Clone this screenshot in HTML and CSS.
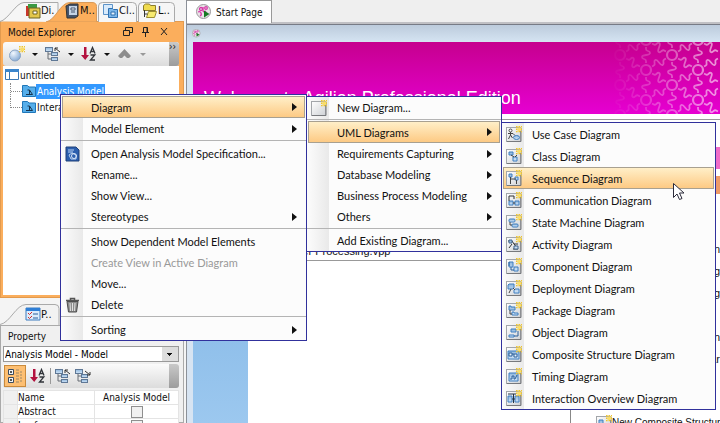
FILE: index.html
```html
<!DOCTYPE html>
<html lang="en">
<head>
  <meta charset="UTF-8">
  <meta name="viewport" content="width=device-width, initial-scale=1.0">
  <title>Agilian - Start Page</title>
  <link rel="stylesheet" href="styles.css">
</head>
<body>
  <!-- Shared icon parts -->
  <svg class="defs" width="0" height="0" aria-hidden="true">
    <defs>
      <linearGradient id="blue" x1="0" y1="0" x2="0" y2="1">
        <stop offset="0" stop-color="#8fb6dc"/><stop offset="1" stop-color="#d3e6f8"/>
      </linearGradient>
      <linearGradient id="paper" x1="0" y1="0" x2="1" y2="1">
        <stop offset="0" stop-color="#ffffff"/><stop offset="1" stop-color="#cfd2d6"/>
      </linearGradient>
      <radialGradient id="ball" cx=".35" cy=".3" r=".8">
        <stop offset="0" stop-color="#f2f8ff"/><stop offset="1" stop-color="#7da3cf"/>
      </radialGradient>
      <linearGradient id="fade">
        <stop offset="0" stop-color="#000"/><stop offset="1" stop-color="#fff"/>
      </linearGradient>
      <g id="spark">
        <path d="M10 0h1.600v1.600h-1.600zM12.500 0h1.600v1.600h-1.600zM15 0h1v1.600h-1zM10 2.400h1.600v1.600h-1.600zM15 2.400h1v1.600h-1zM10 5h1.600v1.300h-1.600zM12.500 5h1.600v1.300h-1.600zM15 5h1v1.300h-1z" fill="#f0c62e"/>
        <rect x="11.500" y="1.600" width="3.500" height="3.400" fill="#f9dd6a"/>
      </g>
      <g id="frame">
        <rect x=".5" y="1.500" width="14" height="14" fill="url(#paper)" stroke="#a3a6aa"/>
        <path d="M1 15.500h14V2" fill="none" stroke="#77797d"/>
      </g>
      <g id="tree">
        <path d="M3 4v9h4M3 8h4" fill="none" stroke="#666c75"/>
        <g fill="url(#blue)" stroke="#5f7896"><rect x=".5" y="1.500" width="7" height="4"/><rect x="6.500" y="6.500" width="6" height="3"/><rect x="6.500" y="11.500" width="6" height="3"/></g>
      </g>
      <g id="sort">
        <path d="M3 1h2.500v8H8l-3.800 5L0 9h3z" fill="#b3123f"/>
        <path d="M9 7.500l2.500-6 2.500 6M10 5.500h3M9.500 9h4.300l-4.300 5h4.500" fill="none" stroke="#30343a" stroke-width="1.300"/>
      </g>
      <g id="folder">
        <path d="M.5 1.500h5l1.500 1.500h6.500v9.500H.5z" fill="#56aeea" stroke="#1f76b8"/>
        <path d="M4 10.500h6.500L7.500 6H5.500M7.500 6v4.500" fill="none" stroke="#16344f"/>
      </g>
      <g id="cell">
        <circle r="5" stroke-width="2.200"/>
        <path id="wave" d="M0 7v2c0 3 4 1 4 4s-8 1-8 4 4 1 4 4v2"/>
        <use href="#wave" transform="rotate(-60)"/>
        <use href="#wave" transform="rotate(-120)"/>
      </g>
      <g id="start">
        <circle cx="7.500" cy="7.500" r="7" fill="#e9e4e8" stroke="#9b989b"/>
        <g fill="none" stroke="#d936a8" stroke-width="1.300"><circle cx="5" cy="5" r="1.500"/><circle cx="10" cy="4" r="1.300"/><path d="M2 8q2-1 3 1t-1 3M7 3v4q1 2 3 0"/></g>
        <path d="M8 6.500l5.500 3.500L8 13.500z" fill="#157a22"/>
      </g>
    </defs>
  </svg>

  <aside class="dock">
    <!-- Model explorer -->
    <nav class="tabs">
      <svg class="tab-shapes" width="184" height="22" viewBox="0 0 184 22" aria-hidden="true">
        <path d="M0 21.500C8 20 16 2.500 24 2.500H58V22" fill="#f6f6f6" stroke="#aaa"/>
        <path d="M98.500 22V6q0-3.500 4-3.500h30q4 0 4 4V22M138.500 22V6q0-3.500 4-3.500h28q4 0 4 4V22" fill="#f6f6f6" stroke="#aaa"/>
        <path d="M46 22C56 20 60 2.500 70 2.500H92q4.500 0 4.500 4V22z" fill="#fbae5c" stroke="#d99a58"/>
      </svg>
      <button class="tab"><svg width="16" height="16"><path d="M1 3h8v10H1z" fill="#c8372d"/><path d="M3 1h9v4H3z" fill="#3c9a43"/><path d="M4 5h11v10H4z" fill="#e2c64b" stroke="#6f6421"/><path d="M8 8h4v3H8z" fill="#fff" stroke="#6f6421"/></svg>Di.</button>
      <button class="tab"><svg width="16" height="16"><path d="M2 3l4-2h8v12l-3 2H3z" fill="#44546c" stroke="#333"/><path d="M5 3h8v9H5z" fill="#c5d4e6"/><path d="M7 5h4v2H7zM7 9h4" fill="#fff" stroke="#44546c"/></svg>M..</button>
      <button class="tab"><svg width="16" height="16"><path d="M.5 1.500h9v10h-9z" fill="#d8eafb" stroke="#5b93c9"/><path d="M5.500 5.500h4l1 1h4v8h-9z" fill="#7db8ea" stroke="#2f70b0"/><path d="M8 9h4v3H8z" fill="#e7f3fd" stroke="#2f70b0"/></svg>Cl..</button>
      <button class="tab"><svg width="16" height="16"><path d="M1.500 2.500l2-1.500h4l1 1.500h5v5h-12z" fill="#f0dc4e" stroke="#8b7d2c"/><path d="M6.500 8.500h8l-2 6h-8z" fill="#f8ea70" stroke="#9d8e32"/><path d="M2.500 7v7M2.500 11h3" fill="none" stroke="#333"/></svg>L..</button>
    </nav>

    <section class="panel active">
      <header class="panel-title">
        <h2>Model Explorer</h2>
        <button aria-label="Float"><svg width="10" height="10"><path d="M2.500 3V.5h7v5H7M.5 3.500h6v5h-6z" fill="none" stroke="#222"/></svg></button>
        <button aria-label="Pin"><svg width="10" height="10"><path d="M2.500 5V.5h4V5M1 5.500h7M4.500 6v4M6 1v4" fill="none" stroke="#222"/></svg></button>
        <button aria-label="Close"><svg width="10" height="10"><path d="M2 1l6 7M8 1L2 8" stroke="#222"/></svg></button>
      </header>
      <div class="toolbar">
        <button aria-label="New"><svg width="16" height="16"><circle cx="6" cy="9.500" r="5.500" fill="url(#ball)" stroke="#8aa4c4"/><use href="#spark"/></svg></button>
        <i class="down"></i>
        <button aria-label="Show"><svg width="16" height="16"><use href="#tree"/><path d="M15 6l-5-4M10 5V2h3" fill="none" stroke="#333"/></svg></button>
        <i class="down"></i>
        <button aria-label="Sort"><svg width="16" height="16"><use href="#sort"/></svg></button>
        <i class="down"></i>
        <button aria-label="Up"><svg width="16" height="16"><path d="M1 10l6.500-7L14 10l-2 2h-2L7.500 9.500 5 12H3z" fill="#8d8d8d"/></svg></button>
        <i class="down dim"></i>
        <span class="more">››</span>
      </div>
      <ul class="tree">
        <li><svg width="16" height="16"><path d="M1.500 2.500h13v10h-13z" fill="#fff" stroke="#3b78b5"/><path d="M1 2h14v3H1z" fill="#3b85cc"/><path d="M5.500 5v8" stroke="#3b78b5"/></svg>untitled</li>
        <li class="child"><i class="branch"></i><svg width="14" height="14"><use href="#folder"/></svg><span class="selected">Analysis Model</span></li>
        <li class="child last"><i class="branch"></i><svg width="14" height="14"><use href="#folder"/></svg><span>Interaction</span></li>
      </ul>
    </section>

    <!-- Property panel -->
    <nav class="tabs lower">
      <svg class="tab-shapes" width="184" height="22" viewBox="0 0 184 22" aria-hidden="true">
        <path d="M0 21.500C10 20 16 1.500 26 1.500H55q4 0 4 4V22" fill="#f2f2f2" stroke="#aaa"/>
      </svg>
      <button class="tab"><svg width="16" height="16"><path d="M1 2h14v12H1z" fill="#dcecfb" stroke="#3d7cc0"/><path d="M1 2h14v3H1z" fill="#2f7fd6"/><path d="M3 7l1.500 1.500L7 6M3 11l1.500 1.500L7 10" fill="none" stroke="#d02a2a"/><path d="M8 8h5M8 12h5" stroke="#2b5f9c"/></svg>P..</button>
    </nav>
    <section class="panel property">
      <header class="panel-title"><h2>Property</h2></header>
      <select class="model-select" aria-label="Model"><option>Analysis Model - Model</option></select>
      <div class="toolbar">
        <button class="pressed" aria-label="Categorize"><svg width="16" height="16"><g fill="#eef3f8" stroke="#3e4d5e"><path d="M1.500 1.500h5v5h-5zM1.500 9.500h5v5h-5z"/></g><path d="M3 4h2M4 3v2M3 12h2M4 11v2" stroke="#222"/><path d="M9 2h3M9 5h3M9 8h3M9 11h3M9 14h3M13 4h2M13 7h2M13 10h2M13 13h2" stroke="#9c8866"/></svg></button>
        <button aria-label="Sort"><svg width="16" height="16"><use href="#sort"/></svg></button>
        <i class="bar"></i>
        <button aria-label="Collapse"><svg width="16" height="16"><use href="#tree"/><path d="M15 6l-5-4M10 5V2h3" fill="none" stroke="#333"/></svg></button>
        <button aria-label="Expand"><svg width="16" height="16"><use href="#tree"/><path d="M10 3l5 4M15 4v3h-3" fill="none" stroke="#333"/></svg></button>
        <span class="more"></span>
      </div>
      <table class="props">
        <tr><td></td><th>Name</th><td>Analysis Model</td></tr>
        <tr><td></td><th><label for="abstract">Abstract</label></th><td><input type="checkbox" id="abstract"></td></tr>
        <tr><td></td><th><label for="leaf">Leaf</label></th><td><input type="checkbox" id="leaf"></td></tr>
      </table>
    </section>
  </aside>

  <main class="editor">
    <nav class="editor-tabs">
      <button class="editor-tab"><svg width="16" height="16"><use href="#start"/></svg>Start Page</button>
    </nav>
    <div class="crumb"><svg width="9" height="9" viewBox="0 0 16 16"><use href="#start"/></svg></div>
    <div class="page">
      <header class="banner">
        <h1>Welcome to Agilian Professional Edition</h1>
        <svg class="pattern" width="110" height="72" viewBox="0 0 110 72" aria-hidden="true">
          <mask id="m"><rect width="110" height="72" fill="url(#fade)"/></mask>
          <g mask="url(#m)"><g fill="none" stroke="#fff" stroke-width="1.800" stroke-opacity=".6">
            <use href="#cell" x="10" y="-17"/><use href="#cell" x="10" y="13"/><use href="#cell" x="10" y="43"/><use href="#cell" x="10" y="73"/>
            <use href="#cell" x="36" y="-32"/><use href="#cell" x="36" y="-2"/><use href="#cell" x="36" y="28"/><use href="#cell" x="36" y="58"/>
            <use href="#cell" x="62" y="-17"/><use href="#cell" x="62" y="13"/><use href="#cell" x="62" y="43"/><use href="#cell" x="62" y="73"/>
            <use href="#cell" x="88" y="-32"/><use href="#cell" x="88" y="-2"/><use href="#cell" x="88" y="28"/><use href="#cell" x="88" y="58"/>
            <use href="#cell" x="88" y="88"/>
          </g></g>
        </svg>
      </header>
      <div class="columns">
        <div class="side"></div>
        <div class="recent"><p>Order Processing.vpp</p></div>
        <div class="links">
          <div class="pink"></div>
          <div class="orange"></div>
          <p>n</p><p>ig</p><p>g</p><p></p><p>n</p><p>ar</p>
          <a href="#"><svg width="16" height="16"><use href="#frame"/><path d="M3 5h4v4H3zM8 9h4v3H8z" fill="url(#blue)" stroke="#3f7fc0"/><use href="#spark"/></svg>New Composite Structure</a>
        </div>
      </div>
    </div>
  </main>

  <!-- Context menu -->
  <ul class="menu context">
    <li><button class="hot">Diagram<i class="arrow"></i></button></li>
    <li><button>Model Element<i class="arrow"></i></button></li>
    <li class="sep"></li>
    <li><button><svg width="16" height="16"><path d="M1 1h10l3 3v11H1z" fill="#2c5fae" stroke="#1f4079"/><path d="M3 4h6M3 6h5M4 9l3-2 4 2v4H6z" fill="none" stroke="#b9d3f4"/><circle cx="9" cy="10" r="2.500" fill="none" stroke="#dce9fa"/></svg>Open Analysis Model Specification...</button></li>
    <li><button>Rename...</button></li>
    <li><button>Show View...</button></li>
    <li><button>Stereotypes<i class="arrow"></i></button></li>
    <li class="sep"></li>
    <li><button>Show Dependent Model Elements</button></li>
    <li><button disabled>Create View in Active Diagram</button></li>
    <li><button>Move...</button></li>
    <li><button><svg width="16" height="16"><path d="M2 4.500h11l-1.500 10.500h-8z" fill="#8b8b8b" stroke="#4c4c4c"/><path d="M1 3.500h13M5.500 3V1.500h4V3" fill="none" stroke="#555" stroke-width="1.500"/><path d="M5 6l.5 8M7.500 6v8M10 6l-.5 8" stroke="#e0e0e0"/></svg>Delete</button></li>
    <li class="sep"></li>
    <li><button>Sorting<i class="arrow"></i></button></li>
  </ul>

  <ul class="menu diagram">
    <li><button><svg width="16" height="16"><use href="#frame"/><use href="#spark"/></svg>New Diagram...</button></li>
    <li class="sep"></li>
    <li><button class="hot">UML Diagrams<i class="arrow"></i></button></li>
    <li><button>Requirements Capturing<i class="arrow"></i></button></li>
    <li><button>Database Modeling<i class="arrow"></i></button></li>
    <li><button>Business Process Modeling<i class="arrow"></i></button></li>
    <li><button>Others<i class="arrow"></i></button></li>
    <li class="sep"></li>
    <li><button>Add Existing Diagram...</button></li>
  </ul>

  <ul class="menu uml">
    <li><button><svg width="16" height="16"><use href="#frame"/><circle cx="4.500" cy="4.500" r="1.500" fill="#fff" stroke="#444"/><path d="M4.500 6v3l-2 4M4.500 9l2 3M2 7.500h5l2 2" fill="none" stroke="#444"/><ellipse cx="10.500" cy="11.500" rx="3" ry="2" fill="url(#blue)" stroke="#3f7fc0"/><use href="#spark"/></svg>Use Case Diagram</button></li>
    <li><button><svg width="16" height="16"><use href="#frame"/><path d="M3 4h4v3H3zM7 9h4v4H7z" fill="url(#blue)" stroke="#3f7fc0"/><path d="M5 7l3 2M11 7L9 9" stroke="#444"/><use href="#spark"/></svg>Class Diagram</button></li>
    <li><button class="hot"><svg width="16" height="16"><use href="#frame"/><path d="M3 4h3v3H3zM9 7h3v3H9z" fill="url(#blue)" stroke="#3f7fc0"/><path d="M4.500 7v7M10.500 10v4M5 9h5" stroke="#444"/><use href="#spark"/></svg>Sequence Diagram</button></li>
    <li><button><svg width="16" height="16"><use href="#frame"/><path d="M3 9h4v4H3zM9 9h4v4H9z" fill="url(#blue)" stroke="#3f7fc0"/><path d="M3 4h5v3M3 4v5M7 11h2" fill="none" stroke="#333"/><use href="#spark"/></svg>Communication Diagram</button></li>
    <li><button><svg width="16" height="16"><use href="#frame"/><rect x="3" y="5" width="6" height="3" rx="1" fill="url(#blue)" stroke="#3f7fc0"/><rect x="6" y="10" width="6" height="3" rx="1" fill="url(#blue)" stroke="#3f7fc0"/><path d="M4 8v3h2" fill="none" stroke="#444"/><use href="#spark"/></svg>State Machine Diagram</button></li>
    <li><button><svg width="16" height="16"><use href="#frame"/><path d="M2 5h4l2 3h4M3 12l3-4M7 13h5l-4-5" fill="none" stroke="#333"/><path d="M3 4h3v3H3zM8 10h4v3H8z" fill="url(#blue)" stroke="#44678d"/><use href="#spark"/></svg>Activity Diagram</button></li>
    <li><button><svg width="16" height="16"><use href="#frame"/><path d="M3 4h4v5H3zM8 9h4v4H8z" fill="url(#blue)" stroke="#3f7fc0"/><path d="M2 5h2M2 7h2M5 9v3h3" fill="none" stroke="#2c609a"/><use href="#spark"/></svg>Component Diagram</button></li>
    <li><button><svg width="16" height="16"><use href="#frame"/><path d="M2 5l1-1h5v4l-1 1H2zM8 10l1-1h4v4H8z" fill="url(#blue)" stroke="#3f7fc0"/><path d="M5 9l-2 4M7 8l2 2" stroke="#444"/><use href="#spark"/></svg>Deployment Diagram</button></li>
    <li><button><svg width="16" height="16"><use href="#frame"/><path d="M3 4h2v1h4v3H3zM6 10h2v1h4v2H6z" fill="url(#blue)" stroke="#3f7fc0"/><path d="M4 8v4h2" fill="none" stroke="#444"/><use href="#spark"/></svg>Package Diagram</button></li>
    <li><button><svg width="16" height="16"><use href="#frame"/><path d="M5 5h5v3H5zM3 11h5v2H3z" fill="url(#blue)" stroke="#3f7fc0"/><path d="M12 7v5H8" fill="none" stroke="#2c609a"/><use href="#spark"/></svg>Object Diagram</button></li>
    <li><button><svg width="16" height="16"><use href="#frame"/><path d="M2 5h11v8H2z" fill="url(#blue)" stroke="#3f7fc0"/><path d="M3 7h3v3H3zM8 8h3v3H8zM6 8h2" fill="#eaf4fd" stroke="#2c609a"/><use href="#spark"/></svg>Composite Structure Diagram</button></li>
    <li><button><svg width="16" height="16"><use href="#frame"/><path d="M3 5h9v8H3z" fill="url(#blue)" stroke="#3f7fc0"/><path d="M4 11h2V8h2v3h1l2-4" fill="none" stroke="#2c609a"/><use href="#spark"/></svg>Timing Diagram</button></li>
    <li><button><svg width="16" height="16"><use href="#frame"/><path d="M2 6h4v6H2zM9 6h4v6H9z" fill="url(#blue)" stroke="#3f7fc0"/><path d="M6 9h3M7.500 4v9M2 4h8" stroke="#234"/><use href="#spark"/></svg>Interaction Overview Diagram</button></li>
  </ul>

  <svg class="pointer" width="12" height="18" aria-hidden="true"><path d="M.5.5v14l3.500-3.500 2.500 5.500 2.500-1-2.500-5.500h4.500z" fill="#fff" stroke="#2a2a3a"/></svg>
</body>
</html>
```

FILE: styles.css
```css
* {
  margin: 0;
  padding: 0;
  box-sizing: border-box;
}

body {
  display: flex;
  height: 100vh;
  overflow: hidden;
  position: relative;
  background-color: #f4f4f4;
  color: #111;
  font-family: "DejaVu Sans Condensed", "DejaVu Sans", sans-serif;
  font-size: 10px;
}

button {
  display: flex;
  align-items: center;
  border: none;
  background: none;
  color: inherit;
  font: inherit;
}

svg {
  flex-shrink: 0;
}

ul {
  list-style: none;
}

.defs {
  position: absolute;
}

/* Left dock */
.dock {
  display: flex;
  flex-direction: column;
  flex-shrink: 0;
  width: 186px;
  padding-right: 2px;
}

.tabs {
  position: relative;
  display: flex;
  flex-shrink: 0;
  height: 21px;
  padding-left: 25px;
}

.tab-shapes {
  position: absolute;
  left: 0;
  top: 0;
}

.tab {
  position: relative;
  width: 39px;
  font-size: 11px;
}

.lower {
  margin-top: 5px;
  height: 22px;
}

.panel {
  display: flex;
  flex-direction: column;
  border: 1px solid #aaa;
  padding: 0 4px 0 2px;
}

.active {
  height: 277px;
  flex-shrink: 0;
  border-color: #e29a4e;
  background-color: #fbae5c;
  padding-bottom: 2px;
}

.panel-title {
  display: flex;
  align-items: center;
  flex-shrink: 0;
  gap: 8px;
  height: 20px;
  padding: 0 10px 0 5px;
}

.panel-title h2 {
  flex: 1;
  font-size: 10px;
  font-weight: normal;
}

.toolbar {
  display: flex;
  align-items: center;
  flex-shrink: 0;
  gap: 7px;
  height: 24px;
  padding-left: 6px;
  border-radius: 3px;
  background: linear-gradient(#fbfbfb, #dcdcdc);
}

.down {
  border: 3px solid transparent;
  border-top-color: #111;
  border-bottom: none;
}

.dim {
  border-top-color: #999;
}

.more {
  align-self: stretch;
  width: 10px;
  margin-left: auto;
  border-radius: 0 3px 3px 0;
  background: linear-gradient(#c9c9c9, #9c9c9c);
  line-height: 10px;
}

.tree {
  flex: 1;
  padding: 1px;
  background-color: #fff;
}

.tree li {
  display: flex;
  align-items: center;
  height: 16px;
}

.tree .child {
  padding-left: 6px;
}

.branch {
  align-self: stretch;
  width: 12px;
  background: repeating-linear-gradient(90deg, #888 0 1px, transparent 1px 2px) 0 8px / 12px 1px no-repeat;
  border-left: 1px dotted #888;
}

.last .branch {
  align-self: flex-start;
  height: 9px;
}

.child span {
  padding: 1px;
  line-height: 13px;
  white-space: nowrap;
}

.child .selected {
  background-color: #3399ff;
  color: #fff;
}

/* Property panel */
.property {
  flex: 1;
  min-height: 0;
  background-color: #f0f0f0;
}

.model-select {
  appearance: none;
  flex-shrink: 0;
  height: 16px;
  margin-bottom: 2px;
  padding-left: 1px;
  border: 1px solid #999;
  background: linear-gradient(#111, #111) no-repeat right 6px top 6px / 5px 1px,
    linear-gradient(#111, #111) no-repeat right 7px top 7px / 3px 1px,
    linear-gradient(#111, #111) no-repeat right 8px top 8px / 1px 1px,
    linear-gradient(90deg, #fff 158px, #ddd 158px);
  font: inherit;
}

.property .toolbar {
  gap: 4px;
  padding-left: 1px;
}

.pressed {
  height: 22px;
  padding: 0 2px;
  border: 1px solid #c98a3c;
  background-color: #fdbf72;
}

.bar {
  width: 1px;
  height: 16px;
  background-color: #999;
}

.props {
  margin-top: 2px;
  border-collapse: collapse;
  background-color: #fff;
  border: 1px solid #aaa;
}

.props th,
.props td {
  height: 14px;
  border: 1px solid #e4e4e4;
  font-weight: normal;
  line-height: 13px;
  text-align: center;
  white-space: nowrap;
}

.props td:first-child {
  width: 14px;
  background-color: #f0f0f0;
}

.props th {
  width: 77px;
  text-align: left;
}

.props input {
  appearance: none;
  display: block;
  width: 12px;
  height: 12px;
  margin: 0 auto;
  border: 1px solid #8f8f8f;
  background-color: #f1f1f1;
}

/* Editor */
.editor {
  display: flex;
  flex-direction: column;
  flex: 1;
  min-width: 0;
  border-left: 1px solid #8b9098;
}

.editor-tabs {
  flex-shrink: 0;
  height: 25px;
  border-bottom: 1px solid #777b85;
  background-color: #efefef;
  box-shadow: inset 0 -2px #c0c0c4;
}

.editor-tab {
  gap: 4px;
  height: 23px;
  padding: 0 8px 0 9px;
  border: 1px solid #999;
  border-left: none;
  border-bottom: none;
  background-color: #fff;
}

.crumb {
  flex-shrink: 0;
  height: 17px;
  padding: 4px 5px;
  background: linear-gradient(#bccbdc, #d5e4f2);
}

.crumb svg {
  display: block;
}

.page {
  display: flex;
  flex-direction: column;
  flex: 1;
  min-height: 0;
  border-left: 6px solid #d7e4f2;
  background-color: #fff;
}

.banner {
  display: flex;
  flex-shrink: 0;
  height: 72px;
  background: linear-gradient(#c6008e, #e600d2);
  color: #fff;
}

.banner h1 {
  flex: 1;
  padding: 46px 0 0 11px;
  font: 18px/20px "Liberation Sans", sans-serif;
  white-space: nowrap;
}

.columns {
  display: flex;
  flex: 1;
  min-height: 0;
}

.side {
  width: 55px;
  background: linear-gradient(#6fa9de, #9cc8ef);
}

.recent {
  flex: 1;
  height: 142px;
  margin-top: 5px;
  border: 1px solid #999;
  border-right: none;
}

.recent p {
  padding: 124px 0 0 35px;
  font: 11px/14px "Liberation Sans", sans-serif;
}

.links {
  width: 150px;
  margin-top: 5px;
  border-top: 1px solid #999;
  border-left: 1px solid #888;
  font: 11px/22px "Liberation Sans", sans-serif;
  text-align: right;
  white-space: nowrap;
}

.pink {
  height: 22px;
  margin: 27px 0 7px;
  background-color: #f06cc8;
}

.orange {
  height: 18px;
  margin-bottom: 44px;
  background-color: #ee9a68;
}

.links p {
  height: 22px;
}

.links a {
  display: flex;
  align-items: center;
  margin: 42px 0 0 25px;
  color: #111;
  font-size: 10px;
  text-decoration: none;
}

/* Menus */
.menu {
  position: absolute;
  border: 1px solid #31319c;
  background: linear-gradient(90deg, #fcfcfc, #e9e9e9 22px, #fcfcfc 22px);
  font-family: Lato, sans-serif;
  font-size: 11px;
}

.context {
  left: 60px;
  top: 94px;
  width: 247px;
  padding-top: 1px;
}

.diagram {
  left: 306px;
  top: 96px;
  width: 196px;
}

.uml {
  left: 501px;
  top: 122px;
  width: 215px;
}

.menu button {
  position: relative;
  width: 100%;
  height: 21px;
  padding-left: 30px;
  white-space: nowrap;
}

.uml button {
  height: 22px;
}

.menu button svg {
  position: absolute;
  left: 4px;
}

.menu .hot {
  height: 22px;
  margin: 0 1px;
  width: calc(100% - 2px);
  padding-left: 28px;
  border: 1px solid #a8a090;
  background: linear-gradient(#ffefc8, #fdca84);
}

.menu .hot svg {
  left: 2px;
}

.menu button:disabled {
  color: #999;
}

.sep {
  height: 4px;
  border-top: 1px solid transparent;
  box-shadow: inset 0 1px #b4b4b4;
}

.diagram .sep {
  height: 3px;
}

.arrow {
  margin-left: auto;
  margin-right: 9px;
  border: 4px solid transparent;
  border-left: 5px solid #111;
  border-right: none;
}

.hot .arrow {
  margin-right: 7px;
}

.pointer {
  position: absolute;
  left: 673px;
  top: 183px;
}
```
